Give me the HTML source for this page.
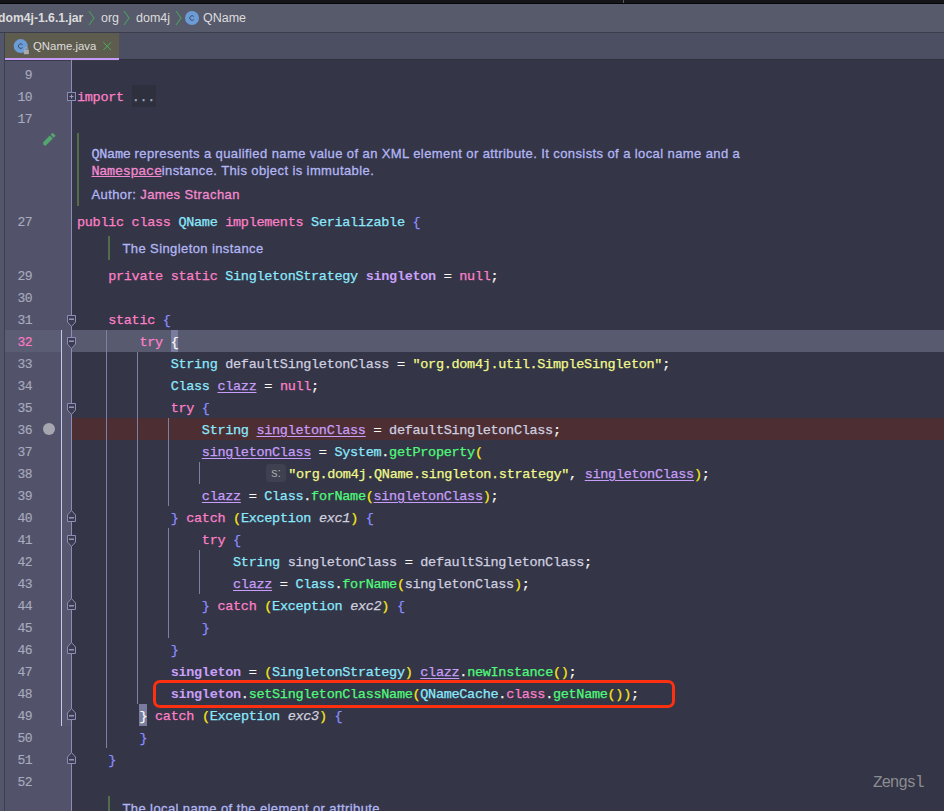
<!DOCTYPE html>
<html><head><meta charset="utf-8">
<style>
*{margin:0;padding:0;box-sizing:border-box}
html,body{width:944px;height:811px;overflow:hidden;background:#343546;position:relative}
body{font-family:"Liberation Sans",sans-serif}
.abs{position:absolute}
#topbar{left:0;top:0;width:944px;height:4px;background:#141519;border-bottom:1px solid #050507}
#crumb{left:0;top:4px;width:944px;height:28px;background:#575a6b}
#crumbsep{left:0;top:32px;width:944px;height:1px;background:#3b3d4c}
#tabbar{left:0;top:33px;width:944px;height:27px;background:#4c4e62;border-bottom:1.5px solid #2e2f3d}
#tab{left:5px;top:33px;width:114px;height:27px;background:#5e5c4e}
#tabline{left:5px;top:58px;width:114px;height:2px;background:#c89af7}
#lstrip{left:0;top:33px;width:4px;height:778px;background:#53566a}
#lstripb{left:4px;top:33px;width:1px;height:778px;background:#3e4050}
#gutter{left:5px;top:60px;width:66px;height:751px;background:#52536b}
#gborder{left:71px;top:60px;width:1px;height:751px;background:#8a8db5}
.ct{font-size:12.5px;color:#dcdcdc;top:11px;white-space:nowrap}
.chev{top:10px;width:7px;height:16px}
.ln{-webkit-text-stroke:0.15px;position:absolute;left:5px;width:27px;text-align:right;font-family:"Liberation Mono",monospace;font-size:13px;color:#a8aabd;height:22px;line-height:22px;letter-spacing:-0.5px;padding-top:2px}
.cl{position:absolute;left:77px;font-family:"Liberation Mono",monospace;font-size:13.5px;letter-spacing:-0.3px;height:22px;line-height:22px;padding-top:2px;-webkit-text-stroke:0.25px;white-space:pre;color:#f8f8f2}
.k{color:#fc80c8}
.t{color:#8be9fd}
.f{color:#bd93f9}
.fb{color:#c9a0fa;font-weight:bold;-webkit-text-stroke:0}
.u{color:#c79df9;text-decoration:underline;text-underline-offset:2px}
.s{color:#f1fa8c}
.m{color:#50fa7b}
.br{color:#8c8cff}
.py{color:#f7e81a}
.lv{color:#d0d0e0}
.it{color:#d0d0de;font-style:italic}
.guide{position:absolute;width:1px;background:#7d7fa3}
.doc{position:absolute;font-size:13px;letter-spacing:0.4px;color:#b2b6f4;white-space:nowrap;-webkit-text-stroke:0.3px}
.docm{font-family:"Liberation Mono",monospace;font-size:13.5px;letter-spacing:-0.3px}
.dbar{position:absolute;width:2px;background:#546c48}
</style></head><body>
<div id="topbar" class="abs"></div>
<div class="abs" style="left:623px;top:0;width:1px;height:3px;background:#5a5a5e"></div>
<div id="crumb" class="abs"></div>
<div id="crumbsep" class="abs"></div>
<div id="tabbar" class="abs"></div>
<div id="lstrip" class="abs"></div>
<div id="lstripb" class="abs"></div>
<div id="tab" class="abs"></div>
<div id="tabline" class="abs"></div>
<div id="gutter" class="abs"></div>
<div class="abs" style="left:5px;top:60px;width:114px;height:1px;background:#3a3b4c"></div>
<div id="gborder" class="abs"></div>

<!-- breadcrumb -->
<div class="abs ct" style="left:-2px;font-weight:bold;font-size:12.2px">dom4j-1.6.1.jar</div>
<svg class="abs chev" style="left:88px" viewBox="0 0 7 16"><path d="M1 1 L6 8 L1 15" fill="none" stroke="#4a9a5e" stroke-width="1.2"/></svg>
<div class="abs ct" style="left:101px">org</div>
<svg class="abs chev" style="left:123px" viewBox="0 0 7 16"><path d="M1 1 L6 8 L1 15" fill="none" stroke="#4a9a5e" stroke-width="1.2"/></svg>
<div class="abs ct" style="left:136px">dom4j</div>
<svg class="abs chev" style="left:175px" viewBox="0 0 7 16"><path d="M1 1 L6 8 L1 15" fill="none" stroke="#4a9a5e" stroke-width="1.2"/></svg>
<svg class="abs" style="left:185px;top:11px" width="14" height="14" viewBox="0 0 14 14"><circle cx="7" cy="7" r="7" fill="#6c9cd6"/><path d="M8.8 5.5 A2.3 2.3 0 1 0 8.8 8.5" fill="none" stroke="#34445e" stroke-width="0.9"/></svg>
<div class="abs ct" style="left:203px">QName</div>

<!-- tab -->
<svg class="abs" style="left:13px;top:38px" width="17" height="17" viewBox="0 0 17 17"><circle cx="7.7" cy="8.1" r="7" fill="#6c9cd6"/><path d="M9.5 6.6 A2.3 2.3 0 1 0 9.5 9.6" fill="none" stroke="#34445e" stroke-width="0.9"/><rect x="10.8" y="12" width="5" height="4.2" fill="#a9a9b2"/><path d="M11.8 12 V10.8 A1.5 1.5 0 0 1 14.8 10.8 V12" fill="none" stroke="#a9a9b2" stroke-width="0.9"/></svg>
<div class="abs ct" style="left:33px;top:39.5px;color:#dedede;font-size:11.4px">QName.java</div>
<svg class="abs" style="left:103px;top:42px" width="8.5" height="8.5" viewBox="0 0 8.5 8.5"><path d="M0.4 0.4 L8.1 8.1 M8.1 0.4 L0.4 8.1" stroke="#4fae5c" stroke-width="1"/></svg>


<!-- current line + breakpoint line bg -->
<div class="abs" style="left:5px;top:330px;width:66px;height:22px;background:#5b5d74"></div>
<div class="abs" style="left:72px;top:330px;width:872px;height:22px;background:#585a70"></div>
<div class="abs" style="left:72px;top:418px;width:872px;height:22px;background:#4d2e33"></div>
<div class="abs" style="left:61px;top:330px;width:1px;height:396px;background:#c4c6f5"></div>

<!-- line numbers -->
<div class="ln" style="top:63px">9</div>
<div class="ln" style="top:85px">10</div>
<div class="ln" style="top:107px">17</div>
<div class="ln" style="top:210px">27</div>
<div class="ln" style="top:264px">29</div>
<div class="ln" style="top:286px">30</div>
<div class="ln" style="top:308px">31</div>
<div class="ln" style="top:330px;color:#ff79c6">32</div>
<div class="ln" style="top:352px">33</div>
<div class="ln" style="top:374px">34</div>
<div class="ln" style="top:396px">35</div>
<div class="ln" style="top:418px">36</div>
<div class="ln" style="top:440px">37</div>
<div class="ln" style="top:462px">38</div>
<div class="ln" style="top:484px">39</div>
<div class="ln" style="top:506px">40</div>
<div class="ln" style="top:528px">41</div>
<div class="ln" style="top:550px">42</div>
<div class="ln" style="top:572px">43</div>
<div class="ln" style="top:594px">44</div>
<div class="ln" style="top:616px">45</div>
<div class="ln" style="top:638px">46</div>
<div class="ln" style="top:660px">47</div>
<div class="ln" style="top:682px">48</div>
<div class="ln" style="top:704px">49</div>
<div class="ln" style="top:726px">50</div>
<div class="ln" style="top:748px">51</div>
<div class="ln" style="top:770px">52</div>

<!-- indent guides -->
<div class="guide" style="left:106px;top:330px;height:418px"></div>
<div class="guide" style="left:137px;top:352px;height:352px"></div>
<div class="guide" style="left:168px;top:418px;height:88px"></div>
<div class="guide" style="left:168px;top:528px;height:110px"></div>
<div class="guide" style="left:199px;top:550px;height:44px"></div>
<div class="guide" style="left:199px;top:462px;height:22px"></div>

<!-- code -->
<div class="cl" style="top:85px"><span class="k">import</span> <span style="background:#2f303e;color:#a4a6be;display:inline-block;height:22px;margin-top:-2px;padding-top:2px;vertical-align:top;width:24px;padding-left:0px">...</span></div>
<div class="cl" style="top:210px"><span class="k">public class</span> <span class="t">QName</span> <span class="k">implements</span> <span class="t">Serializable</span> <span class="br">{</span></div>
<div class="cl" style="top:264px">    <span class="k">private static</span> <span class="t">SingletonStrategy</span> <span class="fb">singleton</span> = <span class="k">null</span>;</div>
<div class="cl" style="top:308px">    <span class="k">static</span> <span class="br">{</span></div>
<div class="cl" style="top:330px">        <span class="k">try</span> <span style="background:#7a7c9e;color:#f8f8f2;display:inline-block;height:22px;margin-top:-2px;padding-top:2px;vertical-align:top">{</span></div>
<div class="cl" style="top:352px">            <span class="t">String</span> <span class="lv">defaultSingletonClass</span> = <span class="s">"org.dom4j.util.SimpleSingleton"</span>;</div>
<div class="cl" style="top:374px">            <span class="t">Class</span> <span class="u">clazz</span> = <span class="k">null</span>;</div>
<div class="cl" style="top:396px">            <span class="k">try</span> <span class="br">{</span></div>
<div class="cl" style="top:418px">                <span class="t">String</span> <span class="u">singletonClass</span> = <span class="lv">defaultSingletonClass</span>;</div>
<div class="cl" style="top:440px">                <span class="u">singletonClass</span> = <span class="t">System</span>.<span class="m">getProperty</span><span class="py">(</span></div>
<div class="cl" style="top:462px">                        <span style="display:inline-block;width:24px"></span><span class="s">"org.dom4j.QName.singleton.strategy"</span>, <span class="u">singletonClass</span><span class="py">)</span>;</div>
<div class="cl" style="top:484px">                <span class="u">clazz</span> = <span class="t">Class</span>.<span class="m">forName</span><span class="py">(</span><span class="u">singletonClass</span><span class="py">)</span>;</div>
<div class="cl" style="top:506px">            <span class="br">}</span> <span class="k">catch</span> <span class="py">(</span><span class="t">Exception</span> <span class="it">exc1</span><span class="py">)</span> <span class="br">{</span></div>
<div class="cl" style="top:528px">                <span class="k">try</span> <span class="br">{</span></div>
<div class="cl" style="top:550px">                    <span class="t">String</span> <span class="lv">singletonClass</span> = <span class="lv">defaultSingletonClass</span>;</div>
<div class="cl" style="top:572px">                    <span class="u">clazz</span> = <span class="t">Class</span>.<span class="m">forName</span><span class="py">(</span><span class="lv">singletonClass</span><span class="py">)</span>;</div>
<div class="cl" style="top:594px">                <span class="br">}</span> <span class="k">catch</span> <span class="py">(</span><span class="t">Exception</span> <span class="it">exc2</span><span class="py">)</span> <span class="br">{</span></div>
<div class="cl" style="top:616px">                <span class="br">}</span></div>
<div class="cl" style="top:638px">            <span class="br">}</span></div>
<div class="cl" style="top:660px">            <span class="fb">singleton</span> = <span class="py">(</span><span class="t">SingletonStrategy</span><span class="py">)</span> <span class="u">clazz</span>.<span class="m">newInstance</span><span class="py">()</span>;</div>
<div class="cl" style="top:682px">            <span class="fb">singleton</span>.<span class="m">setSingletonClassName</span><span class="py">(</span><span class="t">QNameCache</span>.<span class="k">class</span>.<span class="m">getName</span><span class="py">())</span>;</div>
<div class="cl" style="top:704px">        <span style="background:#7a7c9e;color:#f8f8f2;display:inline-block;height:22px;margin-top:-2px;padding-top:2px;vertical-align:top">}</span> <span class="k">catch</span> <span class="py">(</span><span class="t">Exception</span> <span class="it">exc3</span><span class="py">)</span> <span class="br">{</span></div>
<div class="cl" style="top:726px">        <span class="br">}</span></div>
<div class="cl" style="top:748px">    <span class="br">}</span></div>

<!-- inlay hint -->
<div class="abs" style="left:266px;top:464px;width:20px;height:18px;background:#3f4150;border-radius:4px;color:#a8a8ac;font-size:12.5px;line-height:18px;text-align:center">s:</div>

<!-- red box -->
<div class="abs" style="left:153px;top:679.5px;width:522px;height:28.5px;border:3px solid #ff3010;border-radius:7px"></div>

<div class="abs" style="left:62px;top:330px;width:9px;height:396px;background:#55566e"></div>
<svg class="abs" style="left:66px;top:315px" width="11" height="13" viewBox="0 0 11 13"><path d="M1.5 0.5 H9.5 V7 L5.5 11.5 L1.5 7 Z" fill="#3b3c50" stroke="#8a8db5" stroke-width="1"/><path d="M3 4.2 H8" stroke="#a3a6c6" stroke-width="1.3"/></svg>
<svg class="abs" style="left:66px;top:337px" width="11" height="13" viewBox="0 0 11 13"><path d="M1.5 0.5 H9.5 V7 L5.5 11.5 L1.5 7 Z" fill="#3b3c50" stroke="#8a8db5" stroke-width="1"/><path d="M3 4.2 H8" stroke="#a3a6c6" stroke-width="1.3"/></svg>
<svg class="abs" style="left:66px;top:403px" width="11" height="13" viewBox="0 0 11 13"><path d="M1.5 0.5 H9.5 V7 L5.5 11.5 L1.5 7 Z" fill="#3b3c50" stroke="#8a8db5" stroke-width="1"/><path d="M3 4.2 H8" stroke="#a3a6c6" stroke-width="1.3"/></svg>
<svg class="abs" style="left:66px;top:535px" width="11" height="13" viewBox="0 0 11 13"><path d="M1.5 0.5 H9.5 V7 L5.5 11.5 L1.5 7 Z" fill="#3b3c50" stroke="#8a8db5" stroke-width="1"/><path d="M3 4.2 H8" stroke="#a3a6c6" stroke-width="1.3"/></svg>
<svg class="abs" style="left:66px;top:509px" width="11" height="13" viewBox="0 0 11 13"><path d="M1.5 12.5 H9.5 V6 L5.5 1.5 L1.5 6 Z" fill="#3b3c50" stroke="#8a8db5" stroke-width="1"/><path d="M3 8.8 H8" stroke="#a3a6c6" stroke-width="1.3"/></svg>
<svg class="abs" style="left:66px;top:597px" width="11" height="13" viewBox="0 0 11 13"><path d="M1.5 12.5 H9.5 V6 L5.5 1.5 L1.5 6 Z" fill="#3b3c50" stroke="#8a8db5" stroke-width="1"/><path d="M3 8.8 H8" stroke="#a3a6c6" stroke-width="1.3"/></svg>
<svg class="abs" style="left:66px;top:641px" width="11" height="13" viewBox="0 0 11 13"><path d="M1.5 12.5 H9.5 V6 L5.5 1.5 L1.5 6 Z" fill="#3b3c50" stroke="#8a8db5" stroke-width="1"/><path d="M3 8.8 H8" stroke="#a3a6c6" stroke-width="1.3"/></svg>
<svg class="abs" style="left:66px;top:707px" width="11" height="13" viewBox="0 0 11 13"><path d="M1.5 12.5 H9.5 V6 L5.5 1.5 L1.5 6 Z" fill="#3b3c50" stroke="#8a8db5" stroke-width="1"/><path d="M3 8.8 H8" stroke="#a3a6c6" stroke-width="1.3"/></svg>
<svg class="abs" style="left:66px;top:751px" width="11" height="13" viewBox="0 0 11 13"><path d="M1.5 12.5 H9.5 V6 L5.5 1.5 L1.5 6 Z" fill="#3b3c50" stroke="#8a8db5" stroke-width="1"/><path d="M3 8.8 H8" stroke="#a3a6c6" stroke-width="1.3"/></svg>
<svg class="abs" style="left:66px;top:91px" width="11" height="11" viewBox="0 0 11 11"><rect x="1.5" y="1.5" width="8" height="8" fill="#3b3c50" stroke="#8a8db5" stroke-width="1"/><path d="M3.5 5.5 H7.5 M5.5 3.5 V7.5" stroke="#9a9dc0" stroke-width="1"/></svg>
<div class="abs" style="left:42.6px;top:422.5px;width:12.6px;height:12.6px;border-radius:50%;background:#a6a6b0"></div>
<svg class="abs" style="left:36px;top:128px" width="26" height="24" viewBox="0 0 26 24"><g transform="translate(13.2,11.2) rotate(-45)" fill="#52a86c"><path d="M-7.6 -0.6 L-6.6 -2.1 H3.0 V2.1 H-7.6 Z"/><rect x="4.1" y="-2.1" width="2.9" height="4.2"/></g></svg>

<div class="dbar" style="left:77px;top:133px;height:73px"></div>
<div class="doc" style="left:91.5px;top:145.5px"><span class="docm">QName</span> represents a qualified name value of an XML element or attribute. It consists of a local name and a</div>
<div class="doc" style="left:91.5px;top:163px"><span class="docm" style="color:#f28ad0;text-decoration:underline">Namespace</span>instance. This object is immutable.</div>
<div class="doc" style="left:91.5px;top:186.5px">Author: <span style="color:#f28ad0">James Strachan</span></div>
<div class="dbar" style="left:108px;top:236px;height:24px"></div>
<div class="doc" style="left:122.5px;top:240.5px">The Singleton instance</div>
<div class="dbar" style="left:108px;top:796px;height:20px"></div>
<div class="doc" style="left:122.5px;top:800.5px">The local name of the element or attribute.</div>

<!-- watermark -->
<div class="abs" style="left:873px;top:774px;font-family:'Liberation Mono',monospace;font-size:16px;letter-spacing:-1.2px;color:#8c8c90">Zengsl</div>
</body></html>
